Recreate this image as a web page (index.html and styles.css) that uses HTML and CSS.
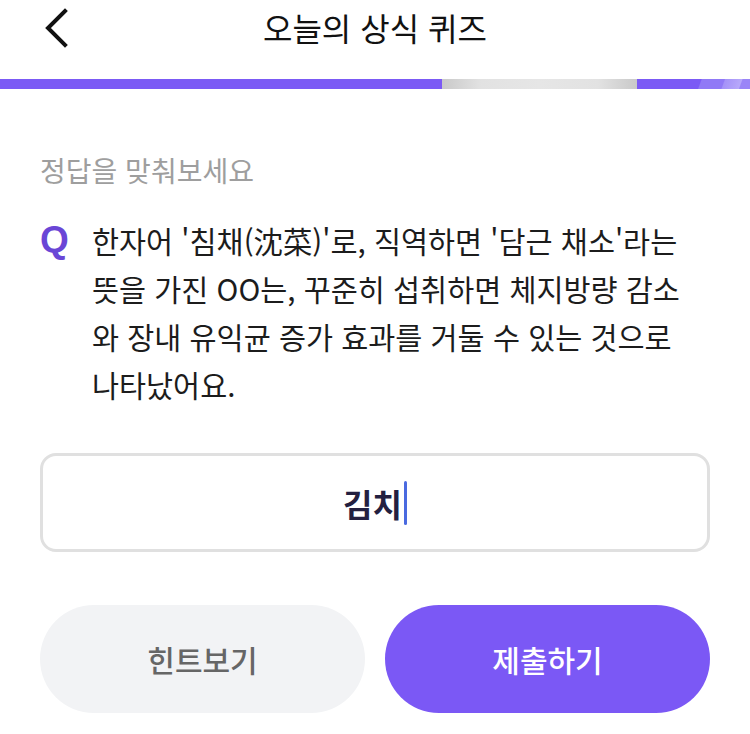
FILE: index.html
```html
<!DOCTYPE html>
<html lang="ko">

<head>
    <meta charset="UTF-8">
    <meta name="viewport" content="width=device-width, initial-scale=1.0">
    <title>오늘의 상식 퀴즈</title>
    <link rel="stylesheet" href="styles.css">
</head>

<body>
    <div class="page">
        <div class="top-bar">
            <button class="back-btn" aria-label="뒤로">
                <svg width="26" height="40" viewBox="0 0 26 40">
                    <path d="M22 3 L5 20 L22 37" fill="none" stroke="#111" stroke-width="4" stroke-linecap="square" stroke-linejoin="miter" />
                </svg>
            </button>
            <h1 class="title">오늘의 상식 퀴즈</h1>
        </div>

        <div class="progress">
            <span class="seg seg-done"></span>
            <span class="seg seg-now"></span>
            <span class="seg seg-rest"></span>
        </div>

        <div class="content">
            <p class="guide">정답을 맞춰보세요</p>

            <div class="question">
                <span class="q-mark">Q</span>
                <p class="q-text">한자어 '침채(沈菜)'로, 직역하면 '담근 채소'라는<br>뜻을 가진 OO는, 꾸준히 섭취하면 체지방량 감소<br>와 장내 유익균 증가 효과를 거둘 수 있는 것으로<br>나타났어요.</p>
            </div>

            <div class="answer-box">
                <span class="answer">김치</span><span class="caret"></span>
            </div>

            <div class="actions">
                <button class="btn hint-btn">힌트보기</button>
                <button class="btn submit-btn">제출하기</button>
            </div>
        </div>
    </div>
</body>

</html>
```

FILE: styles.css
```css
* {
    margin: 0;
    padding: 0;
    box-sizing: border-box;
}

body {
    font-family: "Noto Sans CJK KR", "Noto Sans", sans-serif;
    background: #fff;
    color: #1c1c1c;
}

.page {
    width: 750px;
    height: 734px;
    overflow: hidden;
}

.top-bar {
    position: relative;
    height: 56px;
    display: flex;
    align-items: center;
    justify-content: center;
}

.back-btn {
    position: absolute;
    left: 43px;
    top: 8px;
    background: none;
    border: none;
    display: flex;
}

.title {
    font-size: 32px;
    font-weight: 400;
    color: #111;
    margin-top: -2px;
}

.progress {
    display: flex;
    height: 10px;
    margin-top: 23px;
}

.seg-done {
    width: 442px;
    background: #7b5af5;
}

.seg-now {
    width: 195px;
    background: linear-gradient(to right, #c9c9c9, #e2e2e2 20%, #e6e6e6 50%, #e2e2e2 80%, #c9c9c9);
}

.seg-rest {
    flex: 1;
    background: linear-gradient(110deg, #7b5af5 55%, #9079f6 56%, #9079f6 75%, #a592f8 76%, #b7a8fa 90%, #9a85f7 91%);
}

.content {
    padding: 0 40px;
}

.guide {
    margin-top: 62px;
    font-size: 28px;
    color: #9e9e9e;
    line-height: 38px;
}

.question {
    display: flex;
    margin-top: 27px;
}

.q-mark {
    width: 52px;
    flex-shrink: 0;
    font-family: "Liberation Sans", Arial, sans-serif;
    font-weight: 700;
    font-size: 37px;
    color: #6a46d6;
    line-height: 48px;
}

.q-text {
    font-size: 29.4px;
    line-height: 48px;
    color: #1c1c1c;
}

.answer-box {
    margin-top: 45px;
    height: 99px;
    border: 3px solid #e0e0e0;
    border-radius: 16px;
    display: flex;
    align-items: center;
    justify-content: center;
}

.answer {
    font-size: 32px;
    font-weight: 700;
    color: #232040;
}

.caret {
    width: 3px;
    height: 44px;
    margin-left: 2px;
    border-radius: 2px;
    background: #4a6ae0;
}

.actions {
    display: flex;
    gap: 20px;
    margin-top: 53px;
}

.btn {
    flex: 1;
    height: 108px;
    border: none;
    border-radius: 54px;
    font-family: inherit;
    font-size: 30px;
    font-weight: 500;
}

.hint-btn {
    background: #f2f3f5;
    color: #666;
}

.submit-btn {
    background: #7b58f5;
    color: #fff;
}
```
